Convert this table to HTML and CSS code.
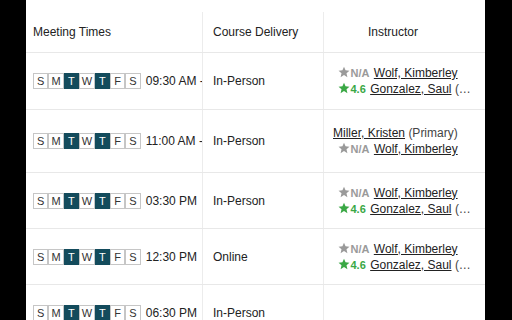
FILE: index.html
```html
<!DOCTYPE html>
<html>
<head>
<meta charset="utf-8">
<link rel="stylesheet" href="styles.css">
</head>
<body>
<div class="panel">
  <div class="row head">
    <div class="cell c1">Meeting Times</div>
    <div class="cell c2">Course Delivery</div>
    <div class="cell c3 ih">Instructor</div>
  </div>

  <div class="row r1">
    <div class="cell c1">
      <div class="days"><span class="d">S</span><span class="d">M</span><span class="d on">T</span><span class="d">W</span><span class="d on">T</span><span class="d">F</span><span class="d">S</span></div>
      <span class="time">09:30 AM -</span>
    </div>
    <div class="cell c2">In-Person</div>
    <div class="cell c3">
      <div class="inst">
        <div class="line"><span class="rt na"><svg class="st" viewBox="0 0 24 24"><path d="M12 1.5l3.1 7.2 7.8.7-5.9 5.2 1.8 7.7L12 18.2l-6.8 4.1 1.8-7.7-5.9-5.2 7.8-.7z"/></svg>N/A</span> <a class="nm">Wolf, Kimberley</a></div>
        <div class="line"><span class="rt ok"><svg class="st" viewBox="0 0 24 24"><path d="M12 1.5l3.1 7.2 7.8.7-5.9 5.2 1.8 7.7L12 18.2l-6.8 4.1 1.8-7.7-5.9-5.2 7.8-.7z"/></svg>4.6</span> <a class="nm">Gonzalez, Saul</a> <span class="extra">(…</span></div>
      </div>
    </div>
  </div>

  <div class="row r2">
    <div class="cell c1">
      <div class="days"><span class="d">S</span><span class="d">M</span><span class="d on">T</span><span class="d">W</span><span class="d on">T</span><span class="d">F</span><span class="d">S</span></div>
      <span class="time">11:00 AM -</span>
    </div>
    <div class="cell c2">In-Person</div>
    <div class="cell c3 alt">
      <div class="inst right">
        <div class="line"><a class="nm">Miller, Kristen</a> <span class="extra">(Primary)</span></div>
        <div class="line"><span class="rt na"><svg class="st" viewBox="0 0 24 24"><path d="M12 1.5l3.1 7.2 7.8.7-5.9 5.2 1.8 7.7L12 18.2l-6.8 4.1 1.8-7.7-5.9-5.2 7.8-.7z"/></svg>N/A</span> <a class="nm">Wolf, Kimberley</a></div>
      </div>
    </div>
  </div>

  <div class="row r3">
    <div class="cell c1">
      <div class="days"><span class="d">S</span><span class="d">M</span><span class="d on">T</span><span class="d">W</span><span class="d on">T</span><span class="d">F</span><span class="d">S</span></div>
      <span class="time">03:30 PM</span>
    </div>
    <div class="cell c2">In-Person</div>
    <div class="cell c3">
      <div class="inst">
        <div class="line"><span class="rt na"><svg class="st" viewBox="0 0 24 24"><path d="M12 1.5l3.1 7.2 7.8.7-5.9 5.2 1.8 7.7L12 18.2l-6.8 4.1 1.8-7.7-5.9-5.2 7.8-.7z"/></svg>N/A</span> <a class="nm">Wolf, Kimberley</a></div>
        <div class="line"><span class="rt ok"><svg class="st" viewBox="0 0 24 24"><path d="M12 1.5l3.1 7.2 7.8.7-5.9 5.2 1.8 7.7L12 18.2l-6.8 4.1 1.8-7.7-5.9-5.2 7.8-.7z"/></svg>4.6</span> <a class="nm">Gonzalez, Saul</a> <span class="extra">(…</span></div>
      </div>
    </div>
  </div>

  <div class="row r3">
    <div class="cell c1">
      <div class="days"><span class="d">S</span><span class="d">M</span><span class="d on">T</span><span class="d">W</span><span class="d on">T</span><span class="d">F</span><span class="d">S</span></div>
      <span class="time">12:30 PM</span>
    </div>
    <div class="cell c2">Online</div>
    <div class="cell c3">
      <div class="inst">
        <div class="line"><span class="rt na"><svg class="st" viewBox="0 0 24 24"><path d="M12 1.5l3.1 7.2 7.8.7-5.9 5.2 1.8 7.7L12 18.2l-6.8 4.1 1.8-7.7-5.9-5.2 7.8-.7z"/></svg>N/A</span> <a class="nm">Wolf, Kimberley</a></div>
        <div class="line"><span class="rt ok"><svg class="st" viewBox="0 0 24 24"><path d="M12 1.5l3.1 7.2 7.8.7-5.9 5.2 1.8 7.7L12 18.2l-6.8 4.1 1.8-7.7-5.9-5.2 7.8-.7z"/></svg>4.6</span> <a class="nm">Gonzalez, Saul</a> <span class="extra">(…</span></div>
      </div>
    </div>
  </div>

  <div class="row r1 last">
    <div class="cell c1">
      <div class="days"><span class="d">S</span><span class="d">M</span><span class="d on">T</span><span class="d">W</span><span class="d on">T</span><span class="d">F</span><span class="d">S</span></div>
      <span class="time">06:30 PM</span>
    </div>
    <div class="cell c2">In-Person</div>
    <div class="cell c3"></div>
  </div>
</div>
</body>
</html>
```

FILE: styles.css
```css
html, body {
  margin: 0;
  padding: 0;
  background: #000;
  height: 320px;
  overflow: hidden;
}
.panel {
  margin-left: 26px;
  width: 459px;
  height: 320px;
  background: #fff;
  padding-top: 12px;
  box-sizing: border-box;
  overflow: hidden;
  font-family: "Liberation Sans", Arial, sans-serif;
  font-size: 12px;
  color: #222;
}
.row {
  display: grid;
  grid-template-columns: 176px 121px 162px;
  border-bottom: 1px solid #e8e8e8;
}
.head { height: 40px; }
.r1 { height: 56px; }
.r2 { height: 62px; }
.r3 { height: 55px; }
.last { border-bottom: none; }
.cell {
  display: flex;
  align-items: center;
  overflow: hidden;
  white-space: nowrap;
}
.c1 { padding-left: 7px; }
.c2 { border-left: 1px solid #ececec; padding-left: 10px; }
.c3 { border-left: 1px solid #ececec; padding-left: 14px; }
.ih { padding-left: 44px; }
.alt { padding-left: 9px; }
.days {
  display: flex;
  flex: none;
  margin-right: 5px;
}
.d {
  box-sizing: border-box;
  width: 15.4px;
  height: 16px;
  border: 1px solid #c6c6c6;
  display: flex;
  align-items: center;
  justify-content: center;
  font-size: 11px;
  color: #333;
  background: #fff;
}
.d.on {
  background: #134b5c;
  border-color: #134b5c;
  color: #fff;
}
.time { flex: none; }
.inst { line-height: 16px; }
.line { height: 16px; }
.inst.right { text-align: right; }
.rt {
  font-weight: bold;
  font-size: 11px;
  margin-right: 1px;
}
.st {
  width: 12px;
  height: 12px;
  fill: currentColor;
  vertical-align: -1px;
  margin-right: 0.5px;
}
.na { color: #9a9a9a; }
.ok { color: #3aa845; }
.nm {
  color: #222;
  text-decoration: underline;
}
.extra { color: #444; }
```
